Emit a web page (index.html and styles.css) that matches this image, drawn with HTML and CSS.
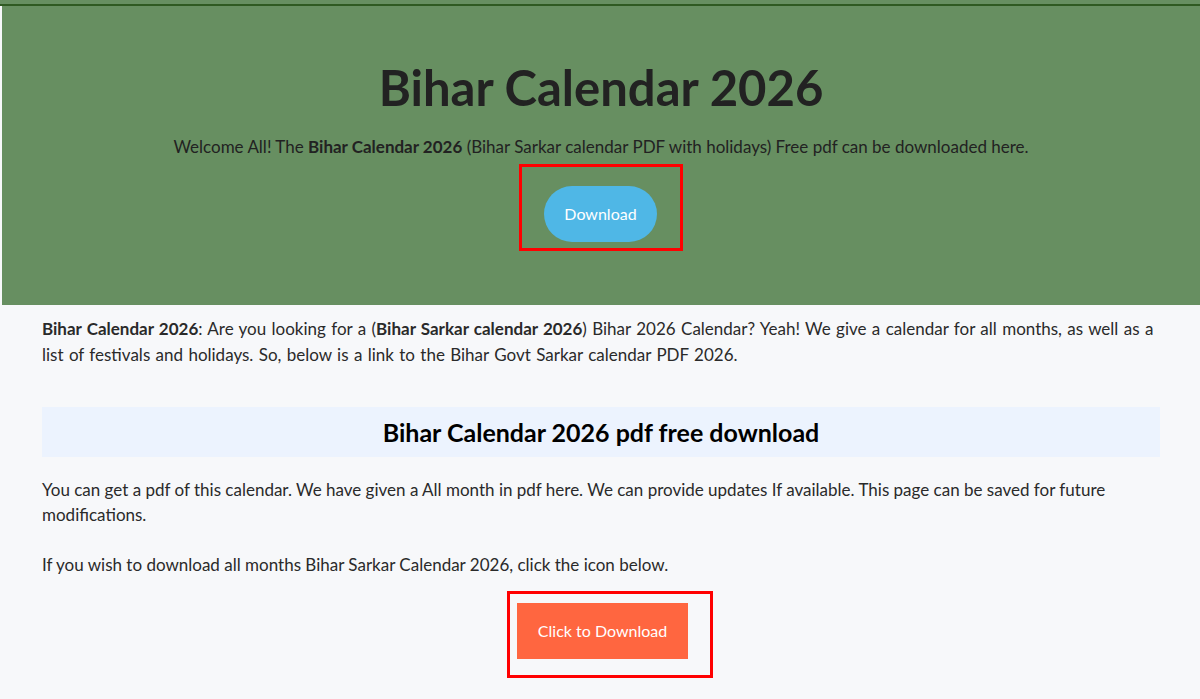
FILE: index.html
```html
<!DOCTYPE html>
<html lang="en">
<head>
<meta charset="utf-8">
<title>Bihar Calendar 2026</title>
<link rel="stylesheet" href="styles.css">
</head>
<body>
<div class="topbar"></div>
<header class="hero">
  <h1 class="hero-title">Bihar Calendar 2026</h1>
  <p class="hero-text">Welcome All! The <strong>Bihar Calendar 2026</strong> (Bihar Sarkar calendar PDF with holidays) Free pdf can be downloaded here.</p>
  <div class="hero-actions">
    <div class="annot annot-hero">
      <a class="btn-pill" href="#">Download</a>
    </div>
  </div>
</header>
<main class="content">
  <p class="intro"><strong>Bihar Calendar 2026</strong>: Are you looking for a (<strong>Bihar Sarkar calendar 2026</strong>) Bihar 2026 Calendar? Yeah! We give a calendar for all months, as well as a list of festivals and holidays. So, below is a link to the Bihar Govt Sarkar calendar PDF 2026.</p>
  <h2 class="section-title">Bihar Calendar 2026 pdf free download</h2>
  <p class="para">You can get a pdf of this calendar. We have given a All month in pdf here. We can provide updates If available. This page can be saved for future modifications.</p>
  <p class="para para-gap">If you wish to download all months Bihar Sarkar Calendar 2026, click the icon below.</p>
  <div class="dl-row">
    <div class="annot annot-dl">
      <a class="btn-block" href="#">Click to Download</a>
    </div>
  </div>
</main>
</body>
</html>
```
FILE: styles.css
```css
html, body {
  margin: 0;
  padding: 0;
}
body {
  background: #f7f8fa;
  font-family: "Lato", "Liberation Sans", sans-serif;
  color: #2a2a2a;
  font-size: 17px;
}
.topbar {
  height: 4px;
  background: #678f61;
  border-bottom: 2px solid #2f5a22;
}
.hero {
  margin-left: 2px;
  height: 299px;
  box-sizing: border-box;
  background: #678f61;
  text-align: center;
  padding-top: 53px;
}
.hero-title {
  margin: 0;
  font-size: 49px;
  line-height: 56px;
  font-weight: 700;
  color: #222222;
}
.hero-text {
  margin: 20px 0 0;
  font-size: 17px;
  line-height: 24px;
  color: #222222;
}
.hero-actions {
  display: flex;
  justify-content: center;
  margin-top: 5px;
}
.annot {
  border: 3px solid #ff0000;
}
.annot-hero {
  padding: 19px 23px 6px 22px;
}
.btn-pill {
  display: block;
  width: 113px;
  height: 56px;
  line-height: 56px;
  border-radius: 28px;
  background: #4fb7e6;
  color: #ffffff;
  text-decoration: none;
  font-size: 16px;
}
.content {
  margin-left: 2px;
  padding: 0 40px;
}
.intro {
  margin: 11px 0 0;
  line-height: 26px;
  word-spacing: 1px;
}
.section-title {
  margin: 39px 0 0;
  height: 50px;
  line-height: 50px;
  background: #ecf3fe;
  text-align: center;
  font-size: 25px;
  font-weight: 700;
  color: #000000;
}
.para {
  margin: 20px 0 0;
  line-height: 25px;
}
.para-gap {
  margin-top: 25px;
}
.dl-row {
  display: flex;
  justify-content: center;
  margin-top: 14px;
}
.annot-dl {
  margin-left: 18px;
  padding: 9px 22px 16px 7px;
}
.btn-block {
  display: block;
  width: 171px;
  height: 56px;
  line-height: 56px;
  background: #ff6640;
  color: #ffffff;
  text-decoration: none;
  text-align: center;
  font-size: 16px;
}
```
